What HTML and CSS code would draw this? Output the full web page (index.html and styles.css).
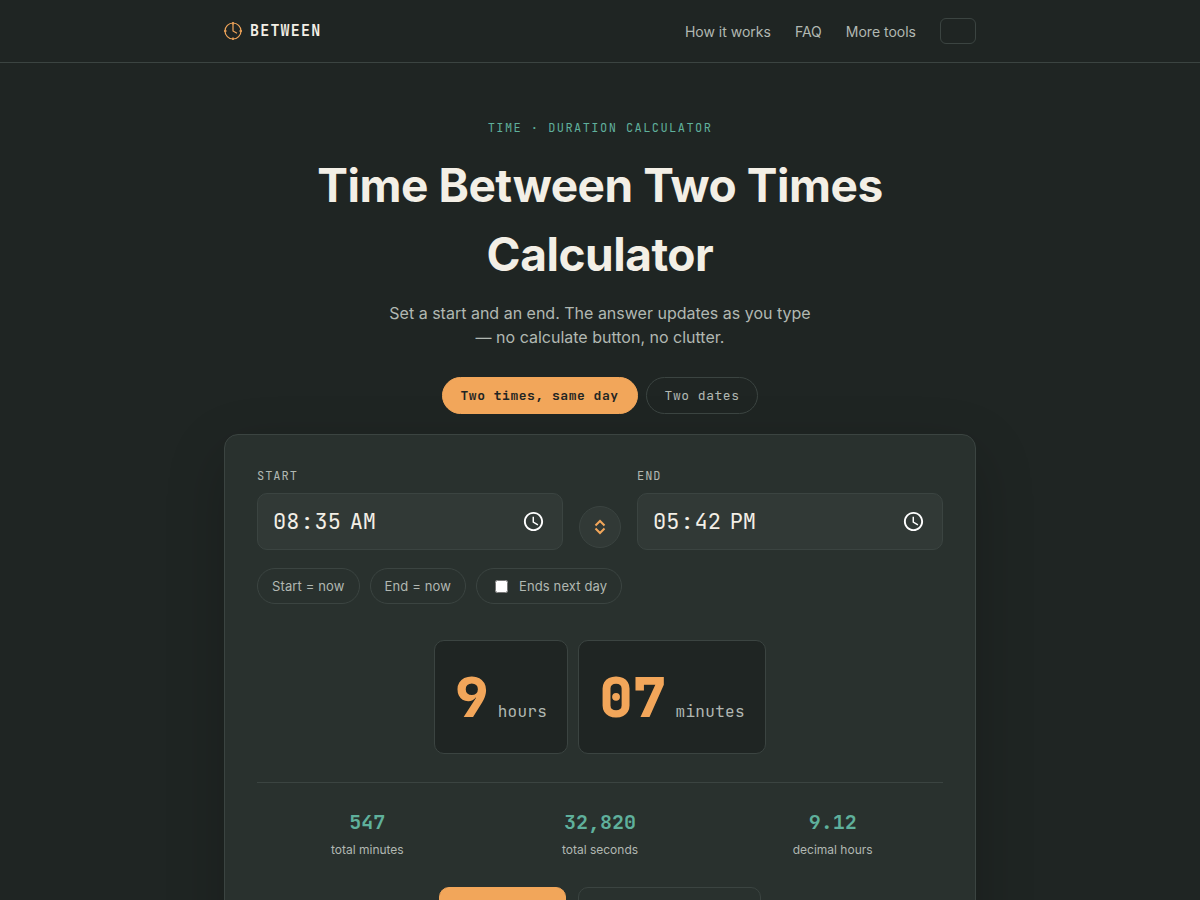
FILE: index.html
```html
<!DOCTYPE html>
<html lang="en">
<head>
    <meta charset="UTF-8">
    <meta name="viewport" content="width=device-width, initial-scale=1.0">
    <title>Time Between Two Times Calculator</title>
    <link rel="stylesheet" href="styles.css">
</head>
<body>
    <header class="site-header">
        <div class="wrap header-inner">
            <a class="brand" href="#">
                <svg width="18" height="18" viewBox="0 0 18 18" fill="none" stroke="currentColor" aria-hidden="true">
                    <circle cx="9" cy="9" r="8" stroke-width="1.2"/>
                    <path d="M9 3v6l4 2.200" stroke-width="1.2"/>
                    <path d="M9 0v3M9 15.500V18M0 9h2.500M15.500 9H18" stroke-width="1.5"/>
                </svg>
                <span>BETWEEN</span>
            </a>
            <nav class="nav">
                <a href="#how">How it works</a>
                <a href="#faq">FAQ</a>
                <a href="#tools">More tools</a>
                <button type="button" class="theme-toggle" aria-label="Toggle theme"></button>
            </nav>
        </div>
    </header>

    <main class="wrap">
        <section class="hero">
            <p class="eyebrow">TIME · DURATION CALCULATOR</p>
            <h1>Time Between Two Times Calculator</h1>
            <p class="lede">Set a start and an end. The answer updates as you type — no calculate button, no clutter.</p>
        </section>

        <div class="modes">
            <button type="button" class="mode active">Two times, same day</button>
            <button type="button" class="mode">Two dates</button>
        </div>

        <section class="card">
            <div class="fields">
                <div class="field">
                    <label for="start">START</label>
                    <input type="time" id="start" value="08:35">
                </div>
                <button type="button" class="swap" aria-label="Swap start and end">
                    <svg width="16" height="16" viewBox="0 0 16 16" fill="none" stroke="currentColor" stroke-width="2" aria-hidden="true">
                        <path d="M3.500 6.500 8 2l4.500 4.500M3.500 9.500 8 14l4.500-4.500"/>
                    </svg>
                </button>
                <div class="field">
                    <label for="end">END</label>
                    <input type="time" id="end" value="17:42">
                </div>
            </div>

            <div class="chips">
                <button type="button" class="chip" id="startNow">Start = now</button>
                <button type="button" class="chip" id="endNow">End = now</button>
                <label class="chip" for="nextDay"><input type="checkbox" id="nextDay">Ends next day</label>
            </div>

            <div class="result">
                <div class="tile"><span class="num" id="hours">9</span><span class="unit">hours</span></div>
                <div class="tile"><span class="num" id="minutes">07</span><span class="unit">minutes</span></div>
            </div>

            <div class="totals">
                <div class="total"><strong id="totalMinutes">547</strong><span>total minutes</span></div>
                <div class="total"><strong id="totalSeconds">32,820</strong><span>total seconds</span></div>
                <div class="total"><strong id="decimalHours">9.12</strong><span>decimal hours</span></div>
            </div>

            <div class="actions">
                <button type="button" class="btn primary">Copy result</button>
                <button type="button" class="btn">Copy shareable link</button>
            </div>
        </section>
    </main>
</body>
</html>
```
FILE: styles.css
```css
* {
    box-sizing: border-box;
}

:root {
    --bg: #1f2523;
    --surface: #29312e;
    --raised: #313936;
    --line: #3b4441;
    --text: #f3efe6;
    --muted: #b1b8b2;
    --amber: #f2a65a;
    --teal: #5fb09c;
    --mono: "JetBrains Mono", "DejaVu Sans Mono", monospace;
}

body {
    margin: 0;
    background: var(--bg);
    color: var(--text);
    font-family: Inter, sans-serif;
    font-size: 16px;
    line-height: 1.5;
}

button,
input {
    font: inherit;
    color: inherit;
}

button {
    cursor: pointer;
}

.wrap {
    max-width: 800px;
    margin: 0 auto;
    padding: 0 24px;
}

.site-header {
    border-bottom: 1px solid var(--line);
}

.header-inner {
    display: flex;
    align-items: center;
    justify-content: space-between;
    padding-top: 18px;
    padding-bottom: 18px;
}

.brand {
    display: flex;
    align-items: center;
    gap: 8px;
    color: var(--text);
    font-family: var(--mono);
    font-size: 15px;
    font-weight: 700;
    letter-spacing: 0.08em;
    text-decoration: none;
}

.brand svg {
    color: var(--amber);
}

.nav {
    display: flex;
    align-items: center;
    gap: 24px;
    font-size: 14px;
}

.nav a {
    color: var(--muted);
    text-decoration: none;
}

.theme-toggle {
    width: 36px;
    height: 26px;
    background: none;
    border: 1px solid var(--line);
    border-radius: 6px;
}

.hero {
    padding-top: 56px;
    text-align: center;
}

.eyebrow {
    margin: 0 0 14px;
    color: var(--teal);
    font-family: var(--mono);
    font-size: 12px;
    letter-spacing: 0.12em;
}

h1 {
    margin: 0 0 12px;
    font-size: 46px;
    font-weight: 700;
    letter-spacing: -0.01em;
}

.lede {
    max-width: 440px;
    margin: 0 auto;
    color: var(--muted);
}

.modes {
    display: flex;
    justify-content: center;
    gap: 8px;
    margin: 28px 0 20px;
}

.mode {
    padding: 8px 18px;
    background: none;
    border: 1px solid var(--line);
    border-radius: 999px;
    color: var(--muted);
    font-family: var(--mono);
    font-size: 13px;
    line-height: 19px;
    letter-spacing: 0.04em;
}

.mode.active {
    background: var(--amber);
    border-color: var(--amber);
    color: var(--bg);
    font-weight: 600;
}

.card {
    padding: 32px;
    background: var(--surface);
    border: 1px solid var(--line);
    border-radius: 14px;
    box-shadow: 0 20px 60px rgba(0, 0, 0, 0.2);
}

.fields {
    display: grid;
    grid-template-columns: 1fr 42px 1fr;
    gap: 16px;
    align-items: end;
}

.field label {
    display: block;
    margin-bottom: 8px;
    color: var(--muted);
    font-family: var(--mono);
    font-size: 12px;
    letter-spacing: 0.08em;
}

.field input {
    display: block;
    width: 100%;
    height: 57px;
    padding: 14px;
    background: var(--raised);
    border: 1px solid var(--line);
    border-radius: 10px;
    color: var(--text);
    font-family: var(--mono);
    font-size: 22px;
}

.field input::-webkit-calendar-picker-indicator {
    filter: invert(1);
}

.swap {
    display: grid;
    place-items: center;
    width: 42px;
    height: 42px;
    margin-bottom: 2px;
    padding: 0;
    background: var(--raised);
    border: 1px solid var(--line);
    border-radius: 50%;
    color: var(--amber);
}

.chips {
    display: flex;
    flex-wrap: wrap;
    gap: 10px;
    margin-top: 18px;
}

.chip {
    display: flex;
    align-items: center;
    padding: 7px 14px;
    background: none;
    border: 1px solid var(--line);
    border-radius: 999px;
    color: var(--muted);
    font-size: 13px;
    line-height: 20px;
    letter-spacing: 0.01em;
}

.chip input {
    margin: 0 11px 0 4px;
}

.result {
    display: flex;
    flex-wrap: wrap;
    justify-content: center;
    gap: 10px;
    margin-top: 36px;
}

.tile {
    display: flex;
    align-items: baseline;
    gap: 9px;
    padding: 14px 20px;
    background: var(--bg);
    border: 1px solid var(--line);
    border-radius: 10px;
    font-family: var(--mono);
}

.num {
    color: var(--amber);
    font-size: 56px;
    font-weight: 800;
}

.unit {
    color: var(--muted);
    font-size: 16px;
    letter-spacing: 0.02em;
}

.totals {
    display: grid;
    grid-template-columns: repeat(3, 1fr);
    gap: 12px;
    margin-top: 28px;
    padding-top: 24px;
    border-top: 1px solid var(--line);
    text-align: center;
}

.total strong {
    display: block;
    color: var(--teal);
    font-family: var(--mono);
    font-size: 20px;
    font-weight: 600;
}

.total span {
    display: block;
    margin-top: 4px;
    color: var(--muted);
    font-size: 12px;
}

.actions {
    display: flex;
    flex-wrap: wrap;
    justify-content: center;
    gap: 12px;
    margin-top: 28px;
}

.btn {
    padding: 14px 24px;
    background: none;
    border: 1px solid var(--line);
    border-radius: 10px;
    font-size: 14px;
    font-weight: 600;
}

.btn.primary {
    background: var(--amber);
    border-color: var(--amber);
    color: var(--bg);
}
```
